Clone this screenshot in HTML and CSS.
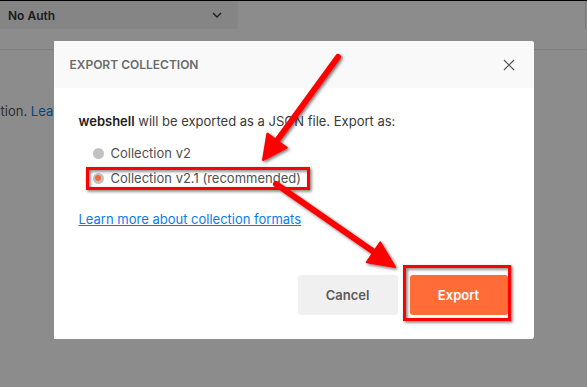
FILE: index.html
```html
<!DOCTYPE html>
<html lang="en">
<head>
  <meta charset="UTF-8">
  <meta name="viewport" content="width=device-width, initial-scale=1.0">
  <title>Export Collection</title>
  <link rel="stylesheet" href="styles.css">
</head>
<body>
  <div class="page">
    <div class="auth-bar">
      <div class="auth-select">
        <span>No Auth</span>
        <svg class="chevron" width="10" height="6" viewBox="0 0 10 6"><path d="M1 1l4 4 4-4" fill="none" stroke="#333" stroke-width="1.3"/></svg>
      </div>
      <div class="side-line"></div>
    </div>
    <div class="page-rule"></div>
    <div class="page-hint"><p>collection. <a href="#">Learn</a></p></div>
  </div>

  <div class="backdrop"></div>

  <div class="modal-wrap">
    <div class="modal">
      <div class="modal-header">
        <h2>EXPORT COLLECTION</h2>
        <svg class="close" width="12" height="12" viewBox="0 0 12 12"><path d="M1 1l10 10M11 1L1 11" stroke="#555" stroke-width="1.2"/></svg>
      </div>
      <div class="modal-body">
        <p class="intro"><b>webshell</b> will be exported as a JSON file. Export as:</p>
        <label class="radio"><span class="dot"></span>Collection v2</label>
        <label class="radio"><span class="dot checked"></span>Collection v2.1 (recommended)</label>
        <a class="learn" href="#">Learn more about collection formats</a>
      </div>
      <div class="modal-footer">
        <button class="btn cancel">Cancel</button>
        <button class="btn export">Export</button>
      </div>
    </div>
  </div>

  <!-- annotations drawn on top of the screenshot -->
  <svg class="marks" width="587" height="387" viewBox="0 0 587 387">
    <defs>
      <filter id="shadow" x="-20%" y="-20%" width="140%" height="140%">
        <feDropShadow dx="1.5" dy="1.5" stdDeviation="1.5" flood-color="#000" flood-opacity="0.55"/>
      </filter>
    </defs>
    <g filter="url(#shadow)" fill="#f00" stroke="#f00">
      <line x1="338" y1="57" x2="276" y2="142" stroke-width="6" stroke-linecap="round"/>
      <polygon points="263,160 286.8,147.7 267.4,133.5" stroke-width="2" stroke-linejoin="round"/>
      <line x1="276" y1="184" x2="374" y2="252" stroke-width="6" stroke-linecap="round"/>
      <polygon points="395,267 366.7,262.2 380.3,242.4" stroke-width="2" stroke-linejoin="round"/>
      <rect x="87.5" y="168.5" width="221" height="20" fill="none" stroke-width="3"/>
      <rect x="404.5" y="266.5" width="105" height="53" fill="none" stroke-width="3"/>
    </g>
  </svg>
</body>
</html>
```

FILE: styles.css
```css
body {
  margin: 0;
  font-family: 'Inter', 'Liberation Sans', sans-serif;
  background: #fff;
  width: 587px;
  height: 387px;
  overflow: hidden;
  position: relative;
}
.page {
  border-top: 1px solid #000;
}
.auth-bar {
  display: flex;
  height: 28px;
}
.auth-select {
  width: 238px;
  background: #f2f2f2;
  border-radius: 0 0 4px 0;
  display: flex;
  align-items: center;
  justify-content: space-between;
  padding: 0 16px 0 8px;
  box-sizing: border-box;
  font-size: 12px;
  font-weight: 600;
  color: #333;
}
.side-line {
  margin-left: auto;
  margin-right: 1px;
  width: 1px;
  background: #ddd;
}
.page-rule {
  margin-top: 20px;
  height: 1px;
  background: #e6e6e6;
}
.page-hint {
  width: 54px;
  margin-top: 53px;
  overflow: hidden;
  display: flex;
  justify-content: flex-end;
}
.page-hint p {
  margin: 0;
  margin-right: -12px;
  flex-shrink: 0;
  font-size: 13px;
  color: #555;
  white-space: nowrap;
}
.page-hint a {
  color: #097bed;
  text-decoration: none;
}
.backdrop {
  position: absolute;
  inset: 0;
  background: rgba(0, 0, 0, 0.45);
}
.modal-wrap {
  position: absolute;
  inset: 0;
  display: flex;
  justify-content: center;
  align-items: flex-start;
  padding-top: 41px;
}
.modal {
  width: 480px;
  background: #fff;
  border-radius: 0 3px 3px 0;
}
.modal-header {
  background: #f9f9f9;
  height: 47px;
  display: flex;
  align-items: center;
  justify-content: space-between;
  padding: 0 19px 0 16px;
  border-radius: 0 3px 0 0;
}
.modal-header h2 {
  margin: 0;
  font-size: 12px;
  font-weight: 600;
  color: #6b6b6b;
}
.modal-body {
  padding: 23px 25px 0;
  display: flex;
  flex-direction: column;
  align-items: flex-start;
  font-size: 13px;
  color: #3a3a3a;
}
.intro {
  margin: 0;
  line-height: 20px;
}
.intro b {
  font-weight: 600;
  color: #212121;
}
.radio {
  display: flex;
  align-items: center;
  gap: 7px;
  line-height: 20px;
  margin-left: 14px;
  color: #505050;
}
.radio:first-of-type {
  margin-top: 12px;
}
.radio + .radio {
  margin-top: 5px;
}
.dot {
  width: 11px;
  height: 11px;
  border-radius: 50%;
  background: #c2c2c2;
  display: flex;
  align-items: center;
  justify-content: center;
}
.dot.checked::after {
  content: '';
  width: 6px;
  height: 6px;
  border-radius: 50%;
  background: #f26b3a;
}
.learn {
  margin-top: 21px;
  line-height: 20px;
  color: #097bed;
  text-decoration: underline;
}
.modal-footer {
  display: flex;
  justify-content: flex-end;
  gap: 12px;
  padding: 46px 26px 24px;
}
.btn {
  height: 40px;
  border: none;
  border-radius: 3px;
  font-family: inherit;
  font-size: 13px;
  font-weight: 600;
}
.cancel {
  width: 100px;
  background: #f0f0f0;
  color: #5a5a5a;
}
.export {
  width: 98px;
  background: #ff6c37;
  color: #fff;
}
.marks {
  position: absolute;
  top: 0;
  left: 0;
  pointer-events: none;
}
```
